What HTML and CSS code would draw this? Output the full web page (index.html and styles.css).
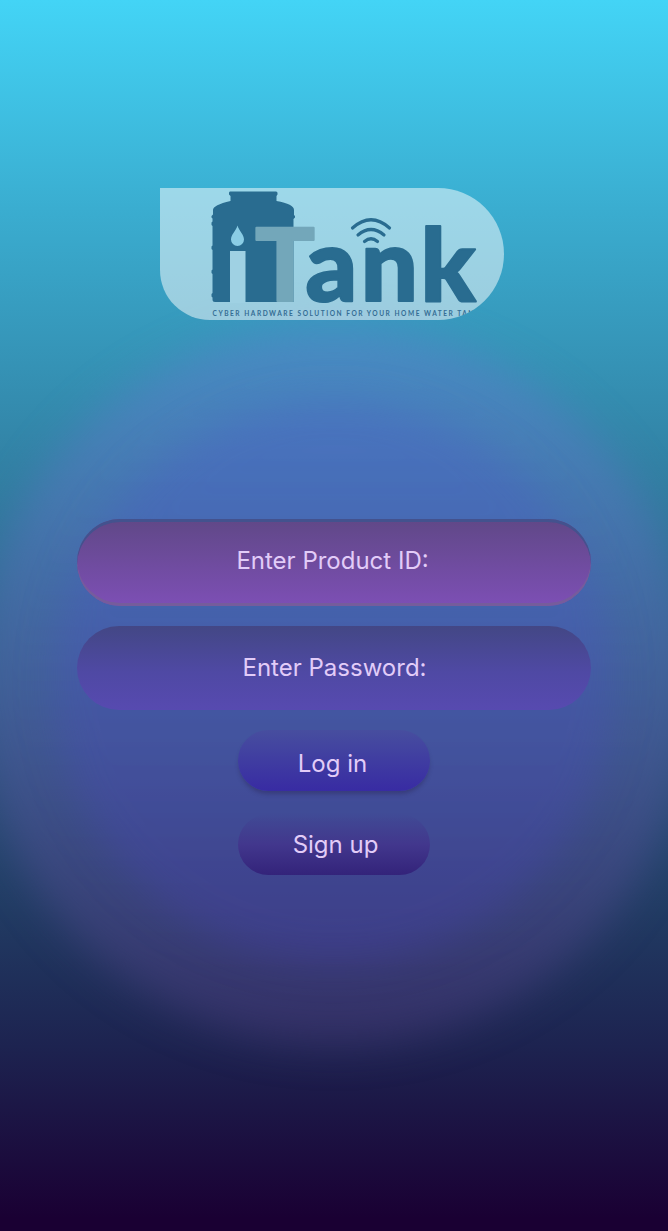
FILE: index.html
```
<!DOCTYPE html>
<html lang="en">
<head>
<meta charset="utf-8">
<title>iTank</title>
<link rel="stylesheet" href="styles.css">
</head>
<body>
<main class="screen">
  <header class="logo-card">
    <svg class="logo" viewBox="0 0 344 132" role="img" aria-label="iTank">
      <path class="ink" d="M70 3.500H116Q117.500 3.500 117.500 5V6.500L116.500 8V13Q134 16 134 22V27L135 28V29.500L133.500 31V114H55Q52.500 114 52.500 111.500V109.500L51.500 108.500V106L52.500 105V86L51.500 85V82.500L52.500 81.500V62L51.500 61V58.500L52.500 57.500V38L51.500 37V34.500L52.500 33.500V30.500L51.500 29.500V28L53 26.500V22Q53 17 70.500 13V8L69 6.500V5Q69 3.500 70 3.500Z"/>
      <path class="cutout" d="M70 63H85.500V115H70Z"/>
      <path class="drop" d="M77.500 37.500C76 43 71 46.500 71 51.500A6.500 6.500 0 0 0 84 51.500C84 46.500 79 43 77.500 37.500Z"/>
      <text class="letter tee" x="95" y="113" textLength="60" lengthAdjust="spacingAndGlyphs">T</text>
      <text class="letter word" x="145.500 200.700 260.500" y="113">ank</text>
      <g class="wifi">
        <path d="M192.500 40Q211 23.500 229.500 40"/>
        <path d="M198 47Q211 36 224 47"/>
        <path d="M204.500 53.500Q211 48 217.500 53.500"/>
      </g>
      <text class="tagline" x="52.500" y="127.500" textLength="267">CYBER HARDWARE SOLUTION FOR YOUR HOME WATER TANK</text>
    </svg>
  </header>
  <form class="form">
    <label class="field product">Enter Product ID:</label>
    <label class="field password">Enter Password:</label>
    <button class="button login" type="button">Log in</button>
    <button class="button signup" type="button">Sign up</button>
  </form>
</main>
</body>
</html>
```
FILE: styles.css
```
* { box-sizing: border-box; }
body { margin: 0; }
.screen {
  position: relative;
  isolation: isolate;
  overflow: hidden;
  width: 668px;
  height: 1231px;
  padding-top: 188px;
  display: flex;
  flex-direction: column;
  font-family: Inter, sans-serif;
  background: linear-gradient(180deg, #43d4f6 0%, #3aadd0 17%, #3282a5 37.500%, #213b63 74%, #1d2350 85%, #1a0033 99%);
}
/* Blurred glow discs behind the form */
.screen::before,
.screen::after {
  content: "";
  position: absolute;
  z-index: -1;
  border-radius: 50%;
}
.screen::before {
  left: -26px;
  top: 326px;
  width: 720px;
  height: 720px;
  background: linear-gradient(rgba(94, 128, 208, .48), rgba(98, 94, 178, .42) 55%, rgba(84, 62, 130, .42));
  filter: blur(20px);
}
.screen::after {
  left: 54px;
  top: 402px;
  width: 560px;
  height: 560px;
  background: linear-gradient(rgba(76, 94, 200, .36), rgba(76, 74, 190, .3) 55%, rgba(76, 64, 185, .3));
  filter: blur(19px);
}
.logo-card {
  width: 344px;
  height: 132px;
  margin-left: 160px;
  overflow: hidden;
  border-radius: 0 66px 66px 50px;
  background: rgba(255, 255, 255, .5);
}
.logo { display: block; width: 344px; height: 132px; }
.ink { fill: #296c90; }
.cutout { fill: #9fd1e3; }
.drop { fill: #8acde5; }
.letter {
  font: 900 101px Lato, sans-serif;
  stroke-width: 2.2;
  stroke-linejoin: round;
}
.word { fill: #296c90; stroke: #296c90; }
.tee { fill: #73a7ba; stroke: #73a7ba; }
.wifi { fill: none; stroke: #296c90; stroke-width: 3.2; stroke-linecap: round; }
.tagline { font: 700 6.600px Lato, sans-serif; fill: #346d94; }
.form {
  margin-top: 199px;
  display: flex;
  flex-direction: column;
  align-items: center;
}
.field,
.button {
  display: flex;
  align-items: center;
  justify-content: center;
  border: 0;
  color: #e2ccf8;
  font: 400 24px/30px Inter, sans-serif;
}
.field { width: 514px; border-radius: 44px; }
.product {
  height: 87px;
  padding: 0 3px 4px 0;
  background: linear-gradient(#604887, #7d4fb5);
  box-shadow: inset 0 3px 0 #43528e, inset 0 -3px 0 #765c9c;
}
.password {
  height: 84px;
  margin-top: 20px;
  padding-left: 1px;
  background: linear-gradient(#434785, #4f49a4 55%, #574ab0);
}
.button { width: 192px; height: 61px; border-radius: 31px; }
.login {
  margin-top: 20px;
  padding: 7px 3px 0 0;
  background: linear-gradient(#474e9f, #382ba3);
  box-shadow: 0 4px 4px -1px rgba(40, 35, 80, .4);
}
.signup {
  margin-top: 23px;
  padding: 0 0 0 3px;
  background: linear-gradient(#45469700, #42378d 50%, #33237a);
}
```
